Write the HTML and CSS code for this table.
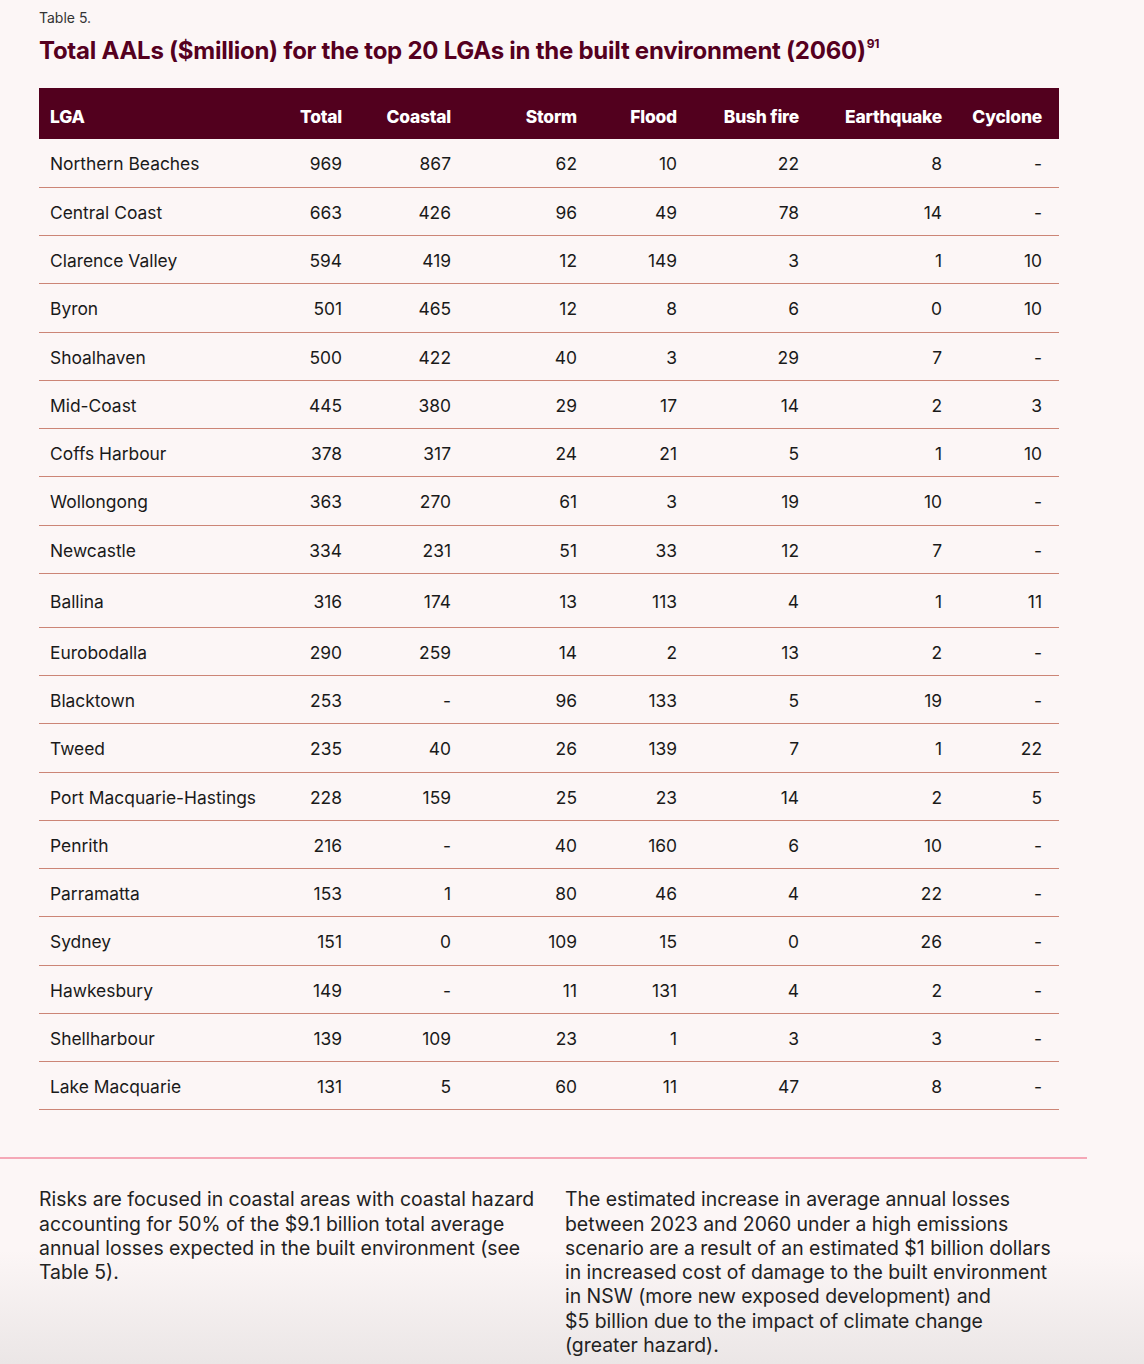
FILE: index.html
```html
<!DOCTYPE html>
<html lang="en">
<head>
<meta charset="utf-8">
<title>Table 5</title>
<link rel="stylesheet" href="styles.css">
</head>
<body>
<main class="page">
  <section class="table-section">
    <p class="caption">Table 5.</p>
    <h1 class="title">Total AALs ($million) for the top 20 LGAs in the built environment (2060)<sup>91</sup></h1>
    <table class="aal">
      <colgroup>
        <col class="c-lga"><col class="c-total"><col class="c-coastal"><col class="c-storm"><col class="c-flood"><col class="c-bush"><col class="c-eq"><col class="c-cyc">
      </colgroup>
      <thead>
        <tr><th class="l">LGA</th><th>Total</th><th>Coastal</th><th>Storm</th><th>Flood</th><th>Bush fire</th><th>Earthquake</th><th>Cyclone</th></tr>
      </thead>
      <tbody>
        <tr><td class="l">Northern Beaches</td><td>969</td><td>867</td><td>62</td><td>10</td><td>22</td><td>8</td><td>-</td></tr>
        <tr><td class="l">Central Coast</td><td>663</td><td>426</td><td>96</td><td>49</td><td>78</td><td>14</td><td>-</td></tr>
        <tr><td class="l">Clarence Valley</td><td>594</td><td>419</td><td>12</td><td>149</td><td>3</td><td>1</td><td>10</td></tr>
        <tr><td class="l">Byron</td><td>501</td><td>465</td><td>12</td><td>8</td><td>6</td><td>0</td><td>10</td></tr>
        <tr><td class="l">Shoalhaven</td><td>500</td><td>422</td><td>40</td><td>3</td><td>29</td><td>7</td><td>-</td></tr>
        <tr><td class="l">Mid-Coast</td><td>445</td><td>380</td><td>29</td><td>17</td><td>14</td><td>2</td><td>3</td></tr>
        <tr><td class="l">Coffs Harbour</td><td>378</td><td>317</td><td>24</td><td>21</td><td>5</td><td>1</td><td>10</td></tr>
        <tr><td class="l">Wollongong</td><td>363</td><td>270</td><td>61</td><td>3</td><td>19</td><td>10</td><td>-</td></tr>
        <tr><td class="l">Newcastle</td><td>334</td><td>231</td><td>51</td><td>33</td><td>12</td><td>7</td><td>-</td></tr>
        <tr class="tall"><td class="l">Ballina</td><td>316</td><td>174</td><td>13</td><td>113</td><td>4</td><td>1</td><td>11</td></tr>
        <tr><td class="l">Eurobodalla</td><td>290</td><td>259</td><td>14</td><td>2</td><td>13</td><td>2</td><td>-</td></tr>
        <tr><td class="l">Blacktown</td><td>253</td><td>-</td><td>96</td><td>133</td><td>5</td><td>19</td><td>-</td></tr>
        <tr><td class="l">Tweed</td><td>235</td><td>40</td><td>26</td><td>139</td><td>7</td><td>1</td><td>22</td></tr>
        <tr><td class="l">Port Macquarie-Hastings</td><td>228</td><td>159</td><td>25</td><td>23</td><td>14</td><td>2</td><td>5</td></tr>
        <tr><td class="l">Penrith</td><td>216</td><td>-</td><td>40</td><td>160</td><td>6</td><td>10</td><td>-</td></tr>
        <tr><td class="l">Parramatta</td><td>153</td><td>1</td><td>80</td><td>46</td><td>4</td><td>22</td><td>-</td></tr>
        <tr><td class="l">Sydney</td><td>151</td><td>0</td><td>109</td><td>15</td><td>0</td><td>26</td><td>-</td></tr>
        <tr><td class="l">Hawkesbury</td><td>149</td><td>-</td><td>11</td><td>131</td><td>4</td><td>2</td><td>-</td></tr>
        <tr><td class="l">Shellharbour</td><td>139</td><td>109</td><td>23</td><td>1</td><td>3</td><td>3</td><td>-</td></tr>
        <tr><td class="l">Lake Macquarie</td><td>131</td><td>5</td><td>60</td><td>11</td><td>47</td><td>8</td><td>-</td></tr>
      </tbody>
    </table>
  </section>
  <hr class="divider">
  <section class="notes">
    <p class="note-left">Risks are focused in coastal areas with coastal hazard accounting for 50% of the $9.1 billion total average annual losses expected in the built environment (see Table&nbsp;5).</p>
    <p class="note-right">The estimated increase in average annual losses between 2023 and 2060 under a high emissions scenario are a result of an estimated $1 billion dollars in increased cost of damage to the built environment in NSW (more new exposed development) and<br>$5 billion due to the impact of climate change (greater hazard).</p>
  </section>
</main>
</body>
</html>
```
FILE: styles.css
```css
html {
  background: linear-gradient(to bottom, #fcf6f6 0px, #fcf6f6 1250px, #ebe6e6 1364px) no-repeat;
  background-color: #ebe6e6;
  min-height: 1364px;
}
body {
  margin: 0;
  font-family: "Inter", "Noto Sans", sans-serif;
  color: #1c1c1c;
}
.page {
  width: 1144px;
  min-height: 1364px;
}
.table-section {
  padding: 9px 0 0 39px;
}
.caption {
  margin: 0;
  font-size: 14px;
  line-height: 18px;
  color: #333;
}
.title {
  margin: 9px 0 0;
  font-size: 24px;
  line-height: 30px;
  font-weight: 700;
  color: #55001f;
  letter-spacing: -0.25px;
}
.title sup {
  font-size: 12px;
  vertical-align: 11px;
  line-height: 0;
  margin-left: 1px;
}
.aal {
  margin-top: 22px;
  width: 1020px;
  table-layout: fixed;
  border-collapse: collapse;
  font-size: 17.4px;
}
.c-lga { width: 231px; }
.c-total { width: 89px; }
.c-coastal { width: 109px; }
.c-storm { width: 126px; }
.c-flood { width: 100px; }
.c-bush { width: 122px; }
.c-eq { width: 143px; }
.c-cyc { width: 100px; }
.aal th {
  background: #52001e;
  color: #fff;
  font-weight: 800;
  height: 51px;
  padding: 5px 17px 0 0;
  box-sizing: border-box;
  text-align: right;
  letter-spacing: -0.2px;
}
.aal td {
  height: 48.25px;
  padding: 2px 17px 0 0;
  box-sizing: border-box;
  text-align: right;
  border-bottom: 1px solid #cc8576;
  color: #1a1a1a;
}
.aal .l {
  text-align: left;
  padding-left: 11px;
  padding-right: 0;
}
.aal tr.tall td {
  height: 54px;
}
.divider {
  margin: 47px 0 0;
  width: 1087px;
  height: 2px;
  border: 0;
  background: #f5a8b7;
}
.notes {
  display: grid;
  grid-template-columns: 500px 492px;
  column-gap: 26px;
  padding: 28px 0 0 39px;
}
.notes p {
  margin: 0;
  font-size: 19.4px;
  line-height: 24.3px;
  color: #222;
}
```
